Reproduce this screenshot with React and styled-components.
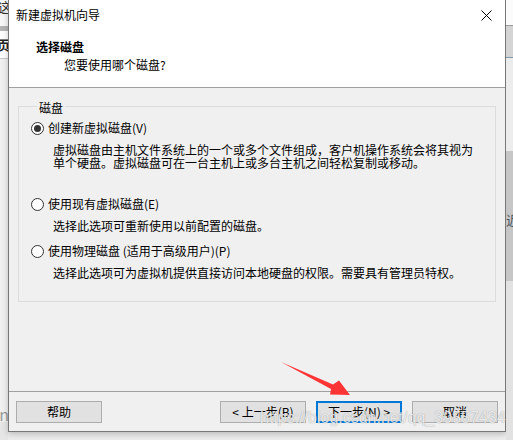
import React from 'react';
import styled, { createGlobalStyle } from 'styled-components';

const GlobalStyle = createGlobalStyle`
    html, body {
        margin: 0;
        padding: 0;
        background: #e9e9e9;
    }
    * {
        box-sizing: border-box;
    }
`;

const Screen = styled.div`
    position: relative;
    width: 513px;
    height: 440px;
    overflow: hidden;
    display: grid;
    grid-template-columns: 8px 498px 1fr;
    grid-template-rows: 432px 1fr;
    background: #ececec;
    font-family: "Noto Sans CJK SC", "Noto Sans", sans-serif;
    font-size: 12px;
    color: #000;
`;

// bits of the window behind the dialog
const Strip = styled.div`
    grid-row: 1 / 3;
    display: flex;
    flex-direction: column;
    overflow: hidden;
`;

const StripBlock = styled.div`
    height: ${(p) => p.h}px;
    flex: ${(p) => (p.grow ? 1 : 'none')};
    background: ${(p) => p.bg};
    border-bottom: ${(p) => (p.line ? `1px solid ${p.line}` : 'none')};
    display: flex;
    justify-content: flex-end;
    align-items: ${(p) => p.align || 'center'};
    overflow: hidden;
`;

const StripGlyph = styled.span`
    flex: none;
    font-size: ${(p) => p.size || 13}px;
    font-weight: ${(p) => (p.bold ? 700 : 400)};
    line-height: 1;
    color: ${(p) => p.color || '#222'};
    margin-right: ${(p) => p.shift || 0}px;
    margin-top: ${(p) => p.drop || 0}px;
`;

const Window = styled.div`
    grid-column: 2;
    grid-row: 1;
    display: flex;
    flex-direction: column;
    border: 1px solid #777;
    border-top: none;
    background: #f0f0f0;
    box-shadow: 0 2px 6px rgba(0, 0, 0, 0.22);
`;

const TitleBar = styled.div`
    height: 30px;
    flex: none;
    display: flex;
    align-items: center;
    justify-content: space-between;
    padding-left: 7px;
    background: #fff;
`;

const TitleText = styled.span`
    line-height: 16px;
`;

const CloseButton = styled.div`
    width: 46px;
    height: 30px;
    display: flex;
    align-items: center;
    justify-content: center;
    margin-right: -4px;
`;

const Header = styled.div`
    height: 58px;
    flex: none;
    padding-top: 9px;
    background: #fff;
    border-bottom: 1px solid #a0a0a0;
`;

const Heading = styled.div`
    padding-left: 27px;
    font-weight: 700;
    line-height: 16px;
`;

const SubHeading = styled.div`
    padding-left: 55px;
    margin-top: 2px;
    line-height: 16px;
`;

const Body = styled.div`
    flex: 1;
    padding: 10px 9px 0 9px;
`;

const Group = styled.fieldset`
    margin: 0;
    padding: 5px 12px 22px 12px;
    border: 1px solid #dcdcdc;
    min-width: 0;
`;

const GroupLabel = styled.legend`
    margin-left: 6px;
    padding: 3px 2px 0 2px;
    line-height: 14px;
`;

const Option = styled.div`
    margin-top: ${(p) => p.gap || 0}px;
`;

const OptionRow = styled.label`
    display: flex;
    align-items: center;
    gap: 4px;
    height: 16px;
    line-height: 16px;
`;

const Radio = styled.span`
    position: relative;
    width: 13px;
    height: 13px;
    flex: none;
    border-radius: 50%;
    border: 1px solid #333;
    background: #fff;

    &::after {
        content: '';
        display: ${(p) => (p.checked ? 'block' : 'none')};
        position: absolute;
        left: 2px;
        top: 2px;
        width: 7px;
        height: 7px;
        border-radius: 50%;
        background: #333;
    }
`;

const Description = styled.div`
    margin-top: 7px;
    padding-left: 22px;
    max-width: 448px;
    line-height: 13px;
`;

const Footer = styled.div`
    height: 40px;
    flex: none;
    display: flex;
    align-items: flex-start;
    gap: 10px;
    padding: 9px 7px 0 7px;
    border-top: 1px solid #a0a0a0;
`;

const Button = styled.div`
    width: 86px;
    height: 22px;
    display: flex;
    align-items: center;
    justify-content: center;
    margin-left: ${(p) => (p.push ? 'auto' : '0')};
    background: #e1e1e1;
    border: ${(p) => (p.primary ? '2px solid #0078d7' : '1px solid #adadad')};
    line-height: 16px;
    white-space: pre;
`;

const Watermark = styled.div`
    position: absolute;
    left: 260px;
    top: 410px;
    font-family: "Liberation Sans", Arial, sans-serif;
    font-size: 16px;
    line-height: 16px;
    color: rgba(255, 255, 255, 0.8);
    text-shadow: 0 0 1px rgba(80, 80, 80, 0.6);
    white-space: nowrap;
    pointer-events: none;
`;

const Arrow = styled.svg`
    position: absolute;
    left: 0;
    top: 0;
    pointer-events: none;
`;

const options = [
    {
        label: '创建新虚拟磁盘(V)',
        text: '虚拟磁盘由主机文件系统上的一个或多个文件组成，客户机操作系统会将其视为单个硬盘。虚拟磁盘可在一台主机上或多台主机之间轻松复制或移动。',
        checked: true,
        gap: 0,
    },
    {
        label: '使用现有虚拟磁盘(E)',
        text: '选择此选项可重新使用以前配置的磁盘。',
        gap: 27,
    },
    {
        label: '使用物理磁盘 (适用于高级用户)(P)',
        text: '选择此选项可为虚拟机提供直接访问本地硬盘的权限。需要具有管理员特权。',
        gap: 11,
    },
];

const CloseIcon = () => (
    <svg width="11" height="11" viewBox="0 0 11 11">
        <path d="M0.5 0.5 L10.5 10.5 M10.5 0.5 L0.5 10.5" stroke="#000" strokeWidth="1" />
    </svg>
);

const App = () => {
    return (
        <>
            <GlobalStyle />
            <Screen>
                <Strip>
                    <StripBlock h={26} bg="#f7f7f7" align="flex-start">
                        <StripGlyph shift={-3} color="#333">这</StripGlyph>
                    </StripBlock>
                    <StripBlock h={5} bg="#b4b4b4" />
                    <StripBlock h={28} bg="#fff" line="#c8c8c8">
                        <StripGlyph bold shift={-2}>页</StripGlyph>
                    </StripBlock>
                    <StripBlock h={363} bg="#f0f0f0" align="flex-end">
                        <StripGlyph size={16} color="#9a9a9a" shift={-1}>n</StripGlyph>
                    </StripBlock>
                    <StripBlock grow bg="#e6e6e6" />
                </Strip>

                <Window>
                    <TitleBar>
                        <TitleText>新建虚拟机向导</TitleText>
                        <CloseButton>
                            <CloseIcon />
                        </CloseButton>
                    </TitleBar>

                    <Header>
                        <Heading>选择磁盘</Heading>
                        <SubHeading>您要使用哪个磁盘?</SubHeading>
                    </Header>

                    <Body>
                        <Group>
                            <GroupLabel>磁盘</GroupLabel>
                            {options.map((o) => (
                                <Option key={o.label} gap={o.gap}>
                                    <OptionRow>
                                        <Radio checked={o.checked} />
                                        {o.label}
                                    </OptionRow>
                                    <Description>{o.text}</Description>
                                </Option>
                            ))}
                        </Group>
                    </Body>

                    <Footer>
                        <Button>帮助</Button>
                        <Button push>{'< 上一步(B)'}</Button>
                        <Button primary>{'下一步(N) >'}</Button>
                        <Button>取消</Button>
                    </Footer>
                </Window>

                <Strip>
                    <StripBlock h={26} bg="#fbfbfb" line="#9a9a9a" />
                    <StripBlock h={32} bg="#d4d4d4" line="#7f98ad" />
                    <StripBlock h={93} bg="#ececec" />
                    <StripBlock h={130} bg="#c6c6c6" align="flex-start">
                        <StripGlyph size={13} color="#4a5560" shift={-6} drop={62}>
                            近
                        </StripGlyph>
                    </StripBlock>
                    <StripBlock grow bg="#e2e2e2" />
                </Strip>

                <Arrow width="513" height="440" viewBox="0 0 513 440">
                    <polygon
                        points="281,362 333,384.5 339,380.5 350,395 330,394.5 331,389"
                        fill="#ff3434"
                    />
                </Arrow>

                <Watermark>https://blog.csdn.net/qq_39557434</Watermark>
            </Screen>
        </>
    );
};

export default App;
